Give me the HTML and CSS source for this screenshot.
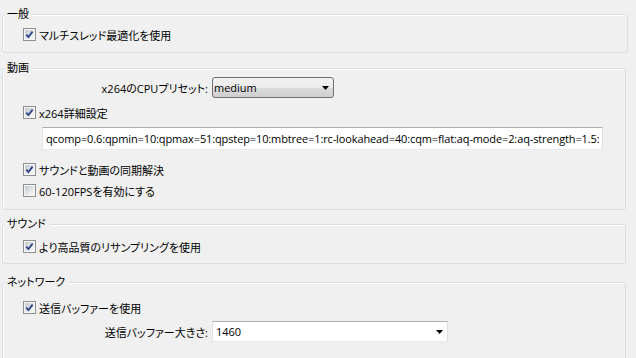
FILE: index.html
```html
<!DOCTYPE html>
<html lang="ja">
<head>
  <meta charset="UTF-8" />
  <title>設定</title>
  <link rel="stylesheet" href="styles.css">
</head>
<body>
  <div class="group g-general">
    <div class="group-title">一般</div>
    <div class="row check-row r-general">
      <span class="check"><svg viewBox="0 0 9 9"><path d="M1.3 4.6 L3.4 7 L7.6 1.6" /></svg></span>
      <span>マルチスレッド最適化を使用</span>
    </div>
  </div>

  <div class="group g-video">
    <div class="group-title">動画</div>
    <div class="row field-row r-preset">
      <span class="field-label">x264のCPUプリセット:</span>
      <div class="combo">
        <span>medium</span>
        <svg class="arrow" viewBox="0 0 7 4"><polygon points="0,0 7,0 3.5,4" /></svg>
      </div>
    </div>
    <div class="row check-row r-x264">
      <span class="check"><svg viewBox="0 0 9 9"><path d="M1.3 4.6 L3.4 7 L7.6 1.6" /></svg></span>
      <span>x264詳細設定</span>
    </div>
    <input class="textbox" type="text" value="qcomp=0.6:qpmin=10:qpmax=51:qpstep=10:mbtree=1:rc-lookahead=40:cqm=flat:aq-mode=2:aq-strength=1.5:" readonly />
    <div class="row check-row r-sync">
      <span class="check"><svg viewBox="0 0 9 9"><path d="M1.3 4.6 L3.4 7 L7.6 1.6" /></svg></span>
      <span>サウンドと動画の同期解決</span>
    </div>
    <div class="row check-row">
      <span class="check"></span>
      <span>60-120FPSを有効にする</span>
    </div>
  </div>

  <div class="group g-sound">
    <div class="group-title">サウンド</div>
    <div class="row check-row r-resample">
      <span class="check"><svg viewBox="0 0 9 9"><path d="M1.3 4.6 L3.4 7 L7.6 1.6" /></svg></span>
      <span>より高品質のリサンプリングを使用</span>
    </div>
  </div>

  <div class="group g-network">
    <div class="group-title">ネットワーク</div>
    <div class="row check-row r-buffer">
      <span class="check"><svg viewBox="0 0 9 9"><path d="M1.3 4.6 L3.4 7 L7.6 1.6" /></svg></span>
      <span>送信バッファーを使用</span>
    </div>
    <div class="row field-row r-size">
      <span class="field-label">送信バッファー大きさ:</span>
      <div class="combo combo-edit">
        <span>1460</span>
        <svg class="arrow" viewBox="0 0 7 4"><polygon points="0,0 7,0 3.5,4" /></svg>
      </div>
    </div>
  </div>
</body>
</html>
```

FILE: styles.css
```css
body {
  margin: 0;
  background: #f0f0f0;
  font-family: "Open Sans", "Noto Sans CJK JP", sans-serif;
  font-size: 11px;
  font-feature-settings: "palt";
  color: #000;
  overflow: hidden;
}
.group {
  margin: 0 10px 0 2px;
  border: 1px solid #d5dfe5;
  border-radius: 3px;
  box-shadow: inset 1px 1px 0 #fff;
}
.group-title {
  width: fit-content;
  height: 14px;
  line-height: 14px;
  margin: -8px 0 0 2px;
  padding: 0 4px 0 2px;
  background: #f0f0f0;
}
.row {
  display: flex;
  align-items: center;
  height: 21px;
  white-space: nowrap;
}
.check-row {
  padding-left: 20px;
  gap: 3px;
}
.check {
  box-sizing: border-box;
  width: 13px;
  height: 13px;
  padding: 1px;
  border: 1px solid #8e8f8f;
  background: linear-gradient(135deg, #c3c8ce, #eceeef 70%, #f7f7f7) content-box, #f6f6f6;
}
.check svg {
  display: block;
  width: 9px;
  height: 9px;
}
.check path {
  fill: none;
  stroke: #2f4487;
  stroke-width: 1.8;
}
.field-row {
  gap: 4px;
}
.field-label {
  width: 205px;
  text-align: right;
}
.combo {
  box-sizing: border-box;
  display: flex;
  align-items: center;
  justify-content: space-between;
  width: 122px;
  height: 21px;
  padding: 0 4px 0 1px;
  border: 1px solid #707070;
  border-radius: 3px;
  background: linear-gradient(#f2f2f2, #ebebeb 50%, #dddddd 50%, #cfcfcf);
}
.combo-edit {
  width: 236px;
  padding-left: 3px;
  border-color: #abadb3 #dbdfe6 #e3e9ef #e2e3ea;
  border-radius: 0;
  background: #fff;
}
.arrow {
  width: 7px;
  height: 4px;
  fill: #000;
}
.textbox {
  display: block;
  box-sizing: border-box;
  width: 561px;
  height: 23px;
  margin: 4px 0 0 39px;
  padding: 0 3px;
  border: 1px solid;
  border-color: #abadb3 #dbdfe6 #e3e9ef #e2e3ea;
  background: #fff;
  font: inherit;
  letter-spacing: -0.12px;
  color: #000;
  outline: none;
}

.g-general {
  margin-top: 14px;
  margin-right: 8px;
  padding-bottom: 7px;
}
.r-general { margin-top: 3px; }

.g-video {
  margin-top: 15px;
  padding-bottom: 8px;
}
.r-preset { margin-top: 2px; }
.r-x264 { margin-top: 4px; }
.r-sync { margin-top: 9px; }

.g-sound {
  margin-top: 14px;
  padding-bottom: 6px;
}
.r-resample { margin-top: 5px; }

.g-network {
  margin-top: 18px;
  padding-bottom: 30px;
}
.r-buffer { margin-top: 8px; }
.r-size { margin-top: 3px; }
```
